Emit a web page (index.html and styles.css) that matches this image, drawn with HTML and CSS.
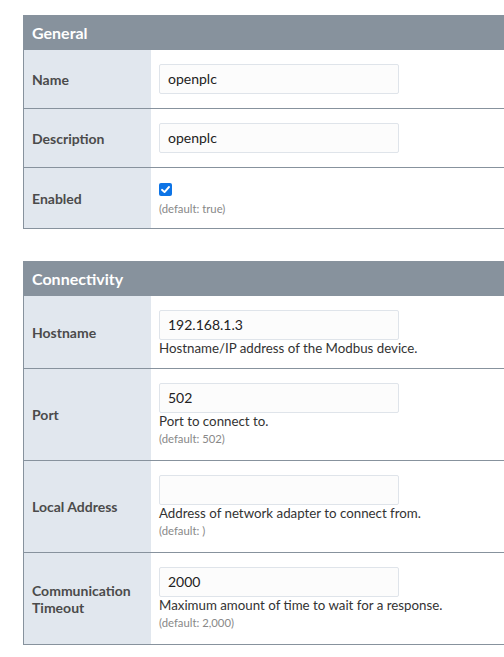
FILE: index.html
```html
<!DOCTYPE html>
<html>
<head>
<meta charset="utf-8">
<link rel="stylesheet" href="styles.css">
</head>
<body>
<div class="page">
  <section class="panel">
    <div class="panel-head">General</div>
    <div class="row">
      <div class="label">Name</div>
      <div class="field field-plain"><div class="input">openplc</div></div>
    </div>
    <div class="row">
      <div class="label">Description</div>
      <div class="field field-plain"><div class="input">openplc</div></div>
    </div>
    <div class="row">
      <div class="label">Enabled</div>
      <div class="field field-check">
        <span class="check"><svg width="13" height="13" viewBox="0 0 13 13"><path d="M3 6.8 L5.5 9.1 L10 4" fill="none" stroke="#fff" stroke-width="1.9" stroke-linecap="round" stroke-linejoin="round"/></svg></span>
        <div class="default">(default: true)</div>
      </div>
    </div>
  </section>

  <section class="panel">
    <div class="panel-head">Connectivity</div>
    <div class="row">
      <div class="label">Hostname</div>
      <div class="field"><div class="input">192.168.1.3</div><div class="help">Hostname/IP address of the Modbus device.</div></div>
    </div>
    <div class="row">
      <div class="label">Port</div>
      <div class="field"><div class="input">502</div><div class="help">Port to connect to.</div><div class="default">(default: 502)</div></div>
    </div>
    <div class="row">
      <div class="label">Local Address</div>
      <div class="field"><div class="input"></div><div class="help">Address of network adapter to connect from.</div><div class="default">(default: )</div></div>
    </div>
    <div class="row">
      <div class="label">Communication Timeout</div>
      <div class="field"><div class="input">2000</div><div class="help">Maximum amount of time to wait for a response.</div><div class="default">(default: 2,000)</div></div>
    </div>
  </section>
</div>
</body>
</html>
```
FILE: styles.css
```css
html, body {
  margin: 0;
  padding: 0;
  background: #ffffff;
  overflow: hidden;
}
body {
  font-family: "Lato", "Open Sans", sans-serif;
  font-size: 13.3px;
  color: #333;
}
.page {
  padding: 15px 0 0 23px;
  width: 560px;
  display: flex;
  flex-direction: column;
  gap: 32px;
}
.panel {
  border-left: 1px solid #87929d;
}
.panel-head {
  background: #87929d;
  color: #ffffff;
  font-weight: 700;
  font-size: 16px;
  height: 35px;
  line-height: 35px;
  padding-left: 8px;
}
.row {
  display: grid;
  grid-template-columns: 127px 1fr;
  border-bottom: 1px solid #87929d;
}
.label {
  background: #e1e7ee;
  font-weight: 700;
  font-size: 14px;
  color: #4b4b4b;
  padding: 0 8px;
  display: flex;
  align-items: center;
  line-height: 17px;
}
.field {
  padding: 14px 8px 11px 8px;
}
.field-plain {
  padding-bottom: 14px;
}
.field-check {
  padding-top: 15px;
}
.input {
  box-sizing: border-box;
  width: 240px;
  height: 30px;
  line-height: 28px;
  border: 1px solid #dfe4ea;
  border-radius: 2px;
  background: #fcfcfc;
  padding-left: 8px;
  font-size: 14px;
  color: #222;
}
.help {
  line-height: 17px;
  color: #333;
}
.default {
  font-size: 11.3px;
  color: #888;
  line-height: 17px;
  margin-bottom: 2px;
}
.field-check .default {
  margin-bottom: 0;
}
.check {
  display: block;
  width: 13px;
  height: 13px;
  background: #0d74e6;
  border-radius: 2px;
  margin-bottom: 4px;
}
.check svg {
  display: block;
}
```
